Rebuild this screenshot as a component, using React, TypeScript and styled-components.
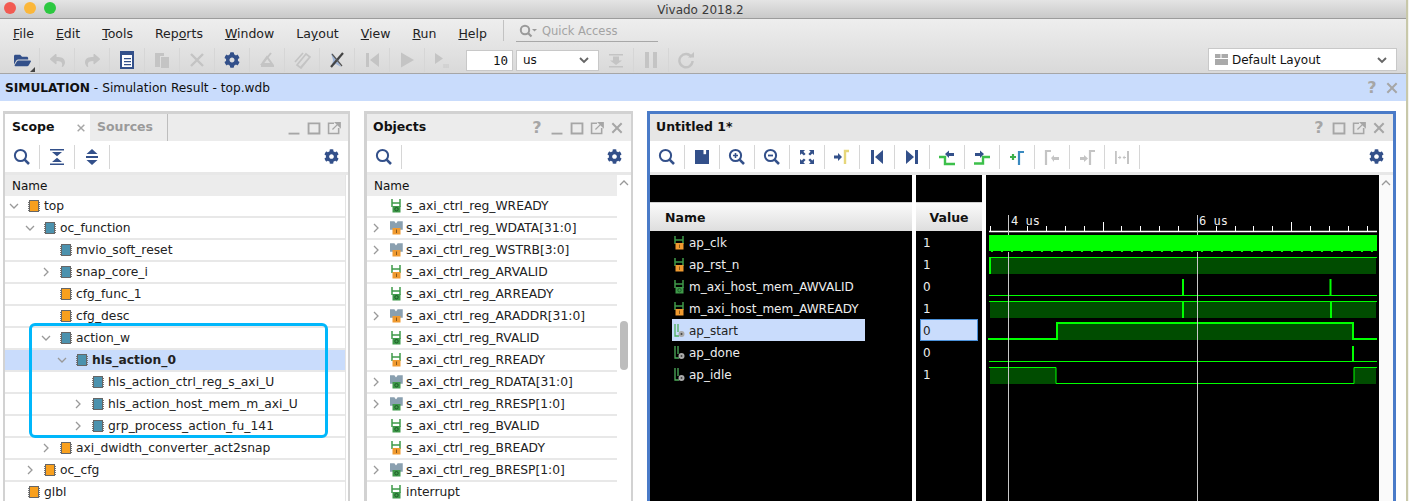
import React from 'react'
import styled, { createGlobalStyle } from 'styled-components'
import { FaCog, FaFolderOpen, FaReply, FaShare } from 'react-icons/fa'

const NAVY = '#33508a'
const OFF = '#c4c4c4'
const MONO = '"DejaVu Sans Mono", monospace'

const Global = createGlobalStyle`
  html, body { margin: 0; padding: 0; background: #fff; overflow: hidden; }
  body { font-family: "DejaVu Sans", sans-serif; font-size: 12px; color: #111; }
  * { box-sizing: border-box; }
`

const Screen = styled.div`
  width: 1409px;
  height: 501px;
  display: flex;
  overflow: hidden;
`
const Win = styled.div`
  width: 1406px;
  display: flex;
  flex-direction: column;
`
const Edge = styled.div`
  flex: 1;
  background: linear-gradient(90deg, #c8c8aa 2px, #f4f4ee 2px);
`
const TitleBar = styled.div`
  height: 19px;
  flex: none;
  display: flex;
  align-items: center;
  justify-content: center;
  position: relative;
  background: linear-gradient(#e4e4e4, #c9c9c9);
  border-bottom: 1px solid #9c9c9c;
  color: #3a3a3a;
  font-size: 12px;
  padding: 1px 5px 0 0;
`
const Lights = styled.div`
  position: absolute;
  left: 4px;
  top: 2px;
  display: flex;
  gap: 8px;
`
const Light = styled.span<{ $c: string }>`
  width: 12px;
  height: 12px;
  border-radius: 50%;
  background: ${(p) => p.$c};
`
const Chrome = styled.div`
  height: 55px;
  flex: none;
  background: linear-gradient(#eeeeee, #d9d9d9);
  border-bottom: 1px solid #a6a6a6;
  display: flex;
  flex-direction: column;
`
const MenuBar = styled.div`
  height: 26px;
  flex: none;
  display: flex;
  align-items: center;
  padding-left: 13px;
  gap: 22px;
  font-size: 12.5px;
  color: #222;
  padding-top: 3px;
`
const MenuSep = styled.div`
  width: 1px;
  height: 21px;
  background: #c2c2c2;
  margin-left: -6px;
  margin-right: -10px;
  margin-top: -6px;
`
const Quick = styled.div`
  width: 142px;
  height: 21px;
  margin-top: -5px;
  border-bottom: 1px solid #a8a8a8;
  display: flex;
  align-items: center;
  gap: 5px;
  padding-left: 3px;
  color: #a3a3a3;
  font-size: 11.5px;
`
const MainTools = styled.div`
  flex: 1;
  display: flex;
  align-items: center;
  padding: 2px 0 0 5px;
`
const Cell = styled.div<{ $plain?: boolean }>`
  width: 35px;
  height: 24px;
  flex: none;
  position: relative;
  display: flex;
  align-items: center;
  justify-content: center;
  border-right: 1px solid ${(p) => (p.$plain ? 'transparent' : '#d6d6d6')};
`
const CornerMark = styled.span`
  position: absolute;
  right: 4px;
  bottom: 0;
  border-style: solid;
  border-width: 0 0 5px 5px;
  border-color: transparent transparent #444 transparent;
`
const SpinBox = styled.div`
  width: 47px;
  height: 21px;
  margin-left: 6px;
  background: #fff;
  border: 1px solid #c8c8c8;
  font-family: ${MONO};
  font-size: 12.5px;
  display: flex;
  align-items: center;
  justify-content: flex-end;
  padding-right: 4px;
`
const Combo = styled.div<{ $w: number; $h: number }>`
  width: ${(p) => p.$w}px;
  height: ${(p) => p.$h}px;
  background: #fff;
  border: 1px solid #c8c8c8;
  display: flex;
  align-items: center;
  font-size: 12px;
  padding: 0 8px 0 6px;
  justify-content: space-between;
`
const ComboLabel = styled.span`
  display: flex;
  align-items: center;
  gap: 4px;
`
const ComboWrap = styled.div`
  margin-left: 3px;
`
const Push = styled.div`
  flex: 1;
`
const LayoutWrap = styled.div`
  margin-right: 9px;
  margin-top: -1px;
`
const ContextBar = styled.div`
  height: 27px;
  flex: none;
  background: #c9dcfc;
  display: flex;
  align-items: center;
  padding: 0 7px 0 5px;
  font-size: 12.2px;
`
const ContextTitle = styled.b`
  font-weight: 700;
  color: #111;
`
const Grow = styled.div`
  flex: 1;
`
const HeadIcons = styled.div`
  display: flex;
  align-items: center;
  gap: 6px;
`
const Workspace = styled.div`
  flex: 1;
  min-height: 0;
  display: flex;
  padding: 10px 0 0 3px;
  gap: 14px;
  overflow: hidden;
`
const Panel = styled.div<{ $w: number; $active?: boolean }>`
  width: ${(p) => p.$w}px;
  flex: none;
  border: ${(p) => (p.$active ? '3px' : '2px')} solid ${(p) => (p.$active ? '#4a7bc8' : '#d2d2d2')};
  border-top-width: 3px;
  border-bottom: none;
  display: flex;
  flex-direction: column;
  background: #fff;
`
const ObjectsPanel = styled(Panel)`
  border-left-width: 3px;
`
const PanelHead = styled.div<{ $active?: boolean }>`
  height: 27px;
  flex: none;
  display: flex;
  align-items: center;
  background: ${(p) => (p.$active ? '#e6e6e6' : '#ececec')};
  padding-right: 7px;
`
const Tab = styled.div<{ $on?: boolean }>`
  height: 27px;
  display: flex;
  align-items: center;
  font-weight: 700;
  font-size: 12.5px;
  background: ${(p) => (p.$on ? '#fff' : 'transparent')};
  color: ${(p) => (p.$on ? '#111' : '#9a9a9a')};
  padding: 0 0 2px 7px;
  width: ${(p) => (p.$on ? '85px' : '78px')};
  border-right: ${(p) => (p.$on ? 'none' : '1px solid #bdbdbd')};
  justify-content: space-between;
`
const TabClose = styled.span`
  margin: 2px 4px 0 0;
  display: flex;
`
const HeadTitle = styled.div`
  font-weight: 700;
  font-size: 12.5px;
  padding: 0 0 2px 6px;
`
const PanelTools = styled.div`
  height: 31px;
  flex: none;
  display: flex;
  align-items: center;
  padding-right: 9px;
  background: #fff;
`
const Strip = styled.div`
  height: 3px;
  flex: none;
  background: #e8e8e8;
`
const ListArea = styled.div`
  flex: 1;
  min-height: 0;
  display: flex;
  position: relative;
`
const List = styled.div`
  flex: 1;
  min-width: 0;
`
const Gutter = styled.div<{ $w: number; $line?: boolean }>`
  width: ${(p) => p.$w}px;
  flex: none;
  background: #fff;
  position: relative;
  border-left: ${(p) => (p.$line ? '1px solid #e4e4e4' : 'none')};
  display: flex;
  justify-content: center;
  padding-top: 3px;
`
const Thumb = styled.div`
  position: absolute;
  top: 146px;
  left: 3px;
  width: 8px;
  height: 49px;
  border-radius: 4px;
  background: #bdbdbd;
`
const ListHeader = styled.div`
  height: 21px;
  background: #ececec;
  padding-left: 7px;
  display: flex;
  align-items: center;
`
const Row = styled.div<{ $sel?: boolean }>`
  height: 22px;
  display: flex;
  align-items: center;
  border-bottom: 2px solid #e8e8e8;
  background: ${(p) => (p.$sel ? '#c9dcfc' : '#fff')};
  font-weight: ${(p) => (p.$sel ? 700 : 400)};
  font-size: 12.3px;
  color: #222;
`
const Twist = styled.span<{ $level: number }>`
  margin-left: ${(p) => p.$level * 16 + 1}px;
  width: 16px;
  flex: none;
  display: flex;
  align-items: center;
  justify-content: center;
`
const Glyph = styled.span`
  width: 16px;
  margin-left: 6px;
  flex: none;
  display: flex;
  align-items: center;
`
const Callout = styled.div`
  position: absolute;
  left: 24px;
  top: 148px;
  width: 299px;
  height: 115px;
  border: 3px solid #00b7fb;
  border-radius: 6px;
  pointer-events: none;
`
const WaveBody = styled.div`
  flex: 1;
  min-height: 0;
  display: flex;
  background: #fff;
  gap: 4px;
`
const NamePane = styled.div`
  width: 262px;
  flex: none;
  background: #000;
  padding-top: 27px;
`
const ValuePane = styled.div`
  width: 66px;
  flex: none;
  background: #000;
  padding-top: 27px;
`
const ColumnHead = styled.div<{ $center?: boolean }>`
  height: 29px;
  background: linear-gradient(#fafafa, #dedede);
  border-top: 1px solid #cfcfcf;
  font-weight: 700;
  font-size: 12.5px;
  display: flex;
  align-items: center;
  justify-content: ${(p) => (p.$center ? 'center' : 'flex-start')};
  padding-left: ${(p) => (p.$center ? 0 : 15)}px;
  color: #111;
`
const WaveRow = styled.div<{ $sel?: boolean }>`
  height: 22px;
  width: 193px;
  margin-left: 22px;
  padding: 1px 0 0 1px;
  display: flex;
  align-items: center;
  gap: 3px;
  color: ${(p) => (p.$sel ? '#222' : '#eee')};
  background: ${(p) => (p.$sel ? '#c9dcfc' : 'transparent')};
`
const ValueCell = styled.div<{ $sel?: boolean }>`
  height: 22px;
  width: 58px;
  margin-left: 4px;
  padding: 1px 0 0 2px;
  display: flex;
  align-items: center;
  color: ${(p) => (p.$sel ? '#222' : '#eee')};
  background: ${(p) => (p.$sel ? '#c9dcfc' : 'transparent')};
  border: 1px solid ${(p) => (p.$sel ? '#4a90d9' : 'transparent')};
`
const WavePane = styled.div`
  width: 393px;
  flex: none;
  background: #000;
`
const WaveSvg = styled.svg`
  display: block;
`
const WaveScroll = styled.div`
  flex: 1;
  background: #fafafa;
  margin-left: -4px;
  display: flex;
  justify-content: center;
  padding-top: 3px;
  height: 100%;
`
const Help = styled.span`
  font-weight: 700;
  font-size: 16px;
  color: #a6a6a6;
  width: 14px;
  text-align: center;
  line-height: 14px;
`

/* ---------- small glyphs ---------- */

const Ic = ({ size = 18, children }: { size?: number; children: React.ReactNode }) => (
  <svg width={size} height={size} viewBox="0 0 18 18">
    {children}
  </svg>
)
const Search = () => (
  <>
    <circle cx="7.5" cy="7.5" r="5.6" fill="#fff" fillOpacity=".4" stroke={NAVY} strokeWidth="2" />
    <path d="M11.6 11.6 16 16" stroke={NAVY} strokeWidth="2.6" />
  </>
)
const Step = ({ d }: { d: string }) => <path d={d} fill="none" stroke="#3cc04a" strokeWidth="2.4" />

const icons: Record<string, React.ReactNode> = {
  search: <Search />,
  collapse: <path d="M2 1h14v1.6H2zM4 4h10L9 8.2zM4 14l5-4.2L14 14zM2 15.4h14V17H2z" fill={NAVY} />,
  expand: <path d="M9 1l5.5 5h-11zM3 8h12v2H3zM3.5 12h11L9 17z" fill={NAVY} />,
  save: (
    <>
      <path d="M2 2h14v14H2z" fill={NAVY} />
      <path d="M10.5 2h2.6v4.2h-2.6z" fill="#fff" />
    </>
  ),
  zoomIn: (
    <>
      <Search />
      <path d="M5 7.5h5M7.5 5v5" stroke={NAVY} strokeWidth="1.6" />
    </>
  ),
  zoomOut: (
    <>
      <Search />
      <path d="M5 7.5h5" stroke={NAVY} strokeWidth="1.8" />
    </>
  ),
  fit: (
    <path
      d="M2 2h5L5.4 3.7l2.2 2.2-1.7 1.7-2.2-2.2L2 7zM16 2v5l-1.7-1.6-2.2 2.2-1.7-1.7 2.2-2.2L11 2zM2 16v-5l1.7 1.6 2.2-2.2 1.7 1.7-2.2 2.2L7 16zM16 16h-5l1.6-1.7-2.2-2.2 1.7-1.7 2.2 2.2L16 11z"
      fill={NAVY}
    />
  ),
  gotoCursor: (
    <>
      <path d="M1 7.5h4V5l4 4-4 4v-2.5H1z" fill={NAVY} />
      <path d="M12 16V3h4" fill="none" stroke="#e6d67a" strokeWidth="2.4" />
    </>
  ),
  first: <path d="M3 2h3v14H3zM15 2v14L7 9z" fill={NAVY} />,
  last: <path d="M3 2v14l8-7zM12 2h3v14h-3z" fill={NAVY} />,
  prevEdge: (
    <>
      <Step d="M1 9h6v7h10" />
      <path d="M7 6l4-3.5V5h5v3h-5v2z" fill={NAVY} />
    </>
  ),
  nextEdge: (
    <>
      <path d="M2 5h5V2.5L11 6l-4 4V8H2z" fill={NAVY} />
      <Step d="M1 15.5h9V9h7" />
    </>
  ),
  addMarker: (
    <>
      <path d="M2 9h6M5 6v6" stroke="#3cb04a" strokeWidth="2.2" />
      <path d="M11 17V4h5" fill="none" stroke="#3a8ac0" strokeWidth="2.2" />
    </>
  ),
  markerPrev: (
    <>
      <path d="M3 17V3h5" fill="none" stroke={OFF} strokeWidth="2.2" />
      <path d="M8 10l3-3v2h5v3h-5v2z" fill={OFF} />
    </>
  ),
  markerNext: (
    <>
      <path d="M2 9h4V7l4 3.5L6 14v-2H2z" fill={OFF} />
      <path d="M12 17V3h5" fill="none" stroke={OFF} strokeWidth="2.2" />
    </>
  ),
  swap: (
    <path d="M2 3h1.8v13H2zM14 3h2v13h-2zM5 9h1.4V7.6L8.4 9.6 6.4 11.5V10H5zM13 9h-1.4V7.6L9.6 9.6l2 1.9V10H13z" fill={OFF} />
  ),
  doc: (
    <>
      <path d="M3 1h12v16H3z" fill="#fff" stroke={NAVY} strokeWidth="2" />
      <path d="M3 1h12v3H3zM6 7h7v1.2H6zM6 10h7v1.2H6zM6 13h7v1.2H6z" fill={NAVY} />
    </>
  ),
  paste: <path d="M2 2h9v3H7v11H2zM8 6h8v11H8z" fill={OFF} />,
  cross: <path d="M3 3l12 12M15 3L3 15" stroke={OFF} strokeWidth="2.4" />,
  build1: (
    <>
      <path d="M3 15h13M4 13l5-7 5 7z" fill="none" stroke={OFF} strokeWidth="2" />
      <path d="M13 2L5 12" stroke={OFF} strokeWidth="2" />
    </>
  ),
  build2: <path d="M4 14l4 3 9-11-4-3zM2 11l8-9M8 16l8-9" fill="none" stroke={OFF} strokeWidth="1.7" />,
  sim: (
    <>
      <path d="M3 2l5 6 5-3-3 6 3 5-5-3-4 2 1-6z" fill="#9fb4d6" />
      <path d="M15 2L3 16" stroke="#444" strokeWidth="2.2" />
      <path d="M4 3l10 12" stroke="#555" strokeWidth="1.2" />
    </>
  ),
  runBack: <path d="M3 2h3v14H3zM16 2v14L7 9z" fill={OFF} />,
  play: <path d="M3 1.5v15L16 9z" fill={OFF} />,
  playT: (
    <>
      <path d="M2 2v11l8-5.5z" fill={OFF} />
      <path d="M11 13v4M13 13v4M15 13v4" stroke={OFF} strokeWidth=".8" />
    </>
  ),
  step: <path d="M2 3h14v1.4H2zM6 5.5h6v4h3l-6 4.5-6-4.5h3zM2 15h14v1.4H2z" fill={OFF} />,
  pause: <path d="M3 1h4v16H3zM11 1h4v16h-4z" fill={OFF} />,
  refresh: (
    <>
      <path d="M14.5 6A6.6 6.6 0 1 0 15.6 10" fill="none" stroke={OFF} strokeWidth="2.4" />
      <path d="M11 6.5h6V1z" fill={OFF} />
    </>
  ),
}

const Tool = ({ name, plain }: { name: string; plain?: boolean }) => (
  <Cell $plain={plain}>
    <Ic>{icons[name]}</Ic>
  </Cell>
)

const Min = () => (
  <Ic size={14}>
    <path d="M2 15h14v2.4H2z" fill="#a6a6a6" />
  </Ic>
)
const Max = () => (
  <Ic size={14}>
    <path d="M2 3h14v13H2z" fill="none" stroke="#a6a6a6" strokeWidth="2.4" />
  </Ic>
)
const Pop = () => (
  <Ic size={14}>
    <path d="M9 3H2v13h13V9" fill="none" stroke="#a6a6a6" strokeWidth="2" />
    <path d="M11 2h6v6zM7 11l6-6" fill="#a6a6a6" stroke="#a6a6a6" strokeWidth="1.6" />
  </Ic>
)
const Close = ({ size = 14 }: { size?: number }) => (
  <Ic size={size}>
    <path d="M3 3l12 12M15 3L3 15" stroke="#a6a6a6" strokeWidth="2.6" />
  </Ic>
)

const chevrons = { down: 'M1 3l4 4 4-4', right: 'M3 1l4 4-4 4', up: 'M1 7l4-4 4 4' }
const Chevron = ({ dir, dark }: { dir: keyof typeof chevrons; dark?: boolean }) => (
  <svg width={dark ? 12 : 10} height="10" viewBox="0 0 10 10">
    <path d={chevrons[dir]} fill="none" stroke={dark ? '#666' : '#999'} strokeWidth={dark ? 1.9 : 1.3} />
  </svg>
)

const Chip = ({ c }: { c: string }) => (
  <svg width="12" height="12" viewBox="0 0 12 12">
    <path d="M0 2.5h12M0 4.5h12M0 6.5h12M0 8.5h12M0 10.5h12" stroke="#777" strokeWidth="1" />
    <rect x="1.5" y=".5" width="9" height="11" fill={c} stroke="#666" strokeWidth="1" />
  </svg>
)

const Signal = ({ kind }: { kind: string }) => {
  const input = kind[0] === 'i'
  const bus = kind[1] === 'b'
  const box = input ? '#f09a30' : '#3f9a4a'
  const pin = bus ? '#8aa0b0' : '#3f9a4a'
  return (
    <svg width="13" height="14" viewBox="0 0 13 14">
      <path d={bus ? 'M0 1h4l2 3 2-3h4v7H0z' : 'M2 0v8M10 0v8M2 4h8'} fill={bus ? pin : 'none'} stroke={pin} strokeWidth="1.5" />
      <rect x="2.5" y="7" width="8" height="6.5" fill={box} />
      {input ? (
        <path d="M6.5 8.5v3.5" stroke="#5b3a10" strokeOpacity=".7" />
      ) : (
        <circle cx="6.5" cy="10.2" r="1.7" fill="none" stroke="#1e5c28" strokeWidth="1" />
      )}
    </svg>
  )
}
const Logic = () => (
  <svg width="13" height="14" viewBox="0 0 13 14">
    <path d="M2 0v12h4M5 0v8" fill="none" stroke="#4fae5c" strokeWidth="1.3" />
    <circle cx="8.5" cy="10" r="3" fill="#aaa" />
    <circle cx="8.5" cy="10" r="1" fill="#444" />
  </svg>
)

/* ---------- data ---------- */

const ORANGE = '#f8a01e'
const TEAL = '#4c92ae'
const scope = [
  { n: 'top', l: 0, c: ORANGE, t: 'down' as const },
  { n: 'oc_function', l: 1, c: TEAL, t: 'down' as const },
  { n: 'mvio_soft_reset', l: 2, c: TEAL },
  { n: 'snap_core_i', l: 2, c: TEAL, t: 'right' as const },
  { n: 'cfg_func_1', l: 2, c: ORANGE },
  { n: 'cfg_desc', l: 2, c: ORANGE },
  { n: 'action_w', l: 2, c: TEAL, t: 'down' as const },
  { n: 'hls_action_0', l: 3, c: TEAL, t: 'down' as const, sel: true },
  { n: 'hls_action_ctrl_reg_s_axi_U', l: 4, c: TEAL },
  { n: 'hls_action_host_mem_m_axi_U', l: 4, c: TEAL, t: 'right' as const },
  { n: 'grp_process_action_fu_141', l: 4, c: TEAL, t: 'right' as const },
  { n: 'axi_dwidth_converter_act2snap', l: 2, c: ORANGE, t: 'right' as const },
  { n: 'oc_cfg', l: 1, c: ORANGE, t: 'right' as const },
  { n: 'glbl', l: 0, c: ORANGE },
]
const objects = [
  ['s_axi_ctrl_reg_WREADY', 'os'],
  ['s_axi_ctrl_reg_WDATA[31:0]', 'ib'],
  ['s_axi_ctrl_reg_WSTRB[3:0]', 'ib'],
  ['s_axi_ctrl_reg_ARVALID', 'is'],
  ['s_axi_ctrl_reg_ARREADY', 'os'],
  ['s_axi_ctrl_reg_ARADDR[31:0]', 'ib'],
  ['s_axi_ctrl_reg_RVALID', 'os'],
  ['s_axi_ctrl_reg_RREADY', 'is'],
  ['s_axi_ctrl_reg_RDATA[31:0]', 'ob'],
  ['s_axi_ctrl_reg_RRESP[1:0]', 'ob'],
  ['s_axi_ctrl_reg_BVALID', 'os'],
  ['s_axi_ctrl_reg_BREADY', 'is'],
  ['s_axi_ctrl_reg_BRESP[1:0]', 'ob'],
  ['interrupt', 'os'],
]
const waves = [
  { n: 'ap_clk', v: '1', k: 'is' },
  { n: 'ap_rst_n', v: '1', k: 'is' },
  { n: 'm_axi_host_mem_AWVALID', v: '0', k: 'os' },
  { n: 'm_axi_host_mem_AWREADY', v: '1', k: 'is' },
  { n: 'ap_start', v: '0', k: 'l', sel: true },
  { n: 'ap_done', v: '0', k: 'l' },
  { n: 'ap_idle', v: '1', k: 'l' },
]
const menus: [string, string, string][] = [
  ['', 'F', 'ile'],
  ['', 'E', 'dit'],
  ['', 'T', 'ools'],
  ['Rep', 'o', 'rts'],
  ['', 'W', 'indow'],
  ['La', 'y', 'out'],
  ['', 'V', 'iew'],
  ['', 'R', 'un'],
  ['', 'H', 'elp'],
]
const waveTools = [
  'search',
  'save',
  'zoomIn',
  'zoomOut',
  'fit',
  'gotoCursor',
  'first',
  'last',
  'prevEdge',
  'nextEdge',
  'addMarker',
  'markerPrev',
  'markerNext',
  'swap',
]

/* ---------- waveform: coordinates inside the 393px black pane ---------- */

const Trace = () => {
  const ticks: number[] = []
  for (let x = 3.5; x < 391; x += 18.85) ticks.push(Math.round(x) + 0.5)
  const teeth: number[] = []
  for (let x = 5; x < 390; x += 10) teeth.push(x)
  const hi = '#00ff00'
  const fill = '#004c00'
  return (
    <WaveSvg width="393" height="326" viewBox="0 0 393 326">
      <path d="M3 56.5h388" stroke="#fff" strokeWidth="1.5" />
      {ticks.map((x, i) => (
        <path key={x} d={`M${x} ${i % 10 === 1 ? 40 : i % 5 === 1 ? 47 : 51}V56`} stroke="#fff" />
      ))}
      <text x="25" y="50" fill="#eee" fontFamily={MONO} fontSize="12">4 us</text>
      <text x="213" y="50" fill="#eee" fontFamily={MONO} fontSize="12">6 us</text>

      <rect x="3" y="60" width="388" height="16" fill={hi} />
      {teeth.map((x) => (
        <rect key={x} x={x} y="76" width="2" height="1" fill={hi} />
      ))}

      <rect x="3" y="82" width="387" height="17" fill={fill} />
      <path d="M3 82.5h388" stroke={hi} />
      <path d="M4 82v17" stroke={hi} strokeWidth="2" />

      <path d="M3 120.5h388" stroke={hi} />
      <path d="M197 104v16M344.5 104v16" stroke={hi} strokeWidth="2" />

      <rect x="4" y="126" width="386" height="17" fill={fill} />
      <path d="M3 126.5h388" stroke={hi} />
      <path d="M197 126v17M345 126v17" stroke={hi} strokeWidth="2" />

      <rect x="71" y="148" width="296" height="17" fill={fill} />
      <path d="M2 164h69V148h296v16h24" fill="none" stroke={hi} strokeWidth="2" />

      <path d="M3 186.5h388" stroke={hi} />
      <path d="M367 171v15" stroke={hi} strokeWidth="2" />

      <rect x="4" y="193" width="66" height="16" fill={fill} />
      <rect x="368" y="193" width="22" height="16" fill={fill} />
      <path d="M3 192.5h67v16h298v-16h23" fill="none" stroke={hi} />

      <path d="M22.5 40V60M22.5 77V326M211.5 40V60M211.5 77V326" stroke="#c8c8c8" strokeWidth="1" />
    </WaveSvg>
  )
}

export default function App() {
  return (
    <Screen>
      <Global />
      <Win>
        <TitleBar>
          <Lights>
            <Light $c="#f25b52" />
            <Light $c="#fbb73a" />
            <Light $c="#2cc840" />
          </Lights>
          Vivado 2018.2
        </TitleBar>

        <Chrome>
          <MenuBar>
            {menus.map(([a, u, b]) => (
              <span key={a + u + b}>
                {a}
                <u>{u}</u>
                {b}
              </span>
            ))}
            <MenuSep />
            <Quick>
              <svg width="18" height="14" viewBox="0 0 18 14">
                <circle cx="6" cy="6" r="4.2" fill="none" stroke="#9a9a9a" strokeWidth="2" />
                <path d="M9 9l3.5 3.5" stroke="#9a9a9a" strokeWidth="2.2" />
                <path d="M13 5h5l-2.5 2.5z" fill="#9a9a9a" />
              </svg>
              Quick Access
            </Quick>
          </MenuBar>
          <MainTools>
            <Cell>
              <FaFolderOpen size={17} color={NAVY} />
              <CornerMark />
            </Cell>
            <Cell>
              <FaReply size={15} color={OFF} />
            </Cell>
            <Cell>
              <FaShare size={15} color={OFF} />
            </Cell>
            <Tool name="doc" />
            <Tool name="paste" />
            <Tool name="cross" />
            <Cell>
              <FaCog size={16} color={NAVY} />
            </Cell>
            <Tool name="build1" />
            <Tool name="build2" />
            <Tool name="sim" />
            <Tool name="runBack" />
            <Tool name="play" />
            <Tool name="playT" plain />
            <SpinBox>10</SpinBox>
            <ComboWrap>
              <Combo $w={83} $h={21}>
                us
                <Chevron dir="down" dark />
              </Combo>
            </ComboWrap>
            <Tool name="step" />
            <Tool name="pause" />
            <Tool name="refresh" plain />
            <Push />
            <LayoutWrap>
              <Combo $w={189} $h={23}>
                <ComboLabel>
                  <svg width="13" height="11" viewBox="0 0 13 11">
                    <path d="M0 0h5.5v4H0zM6.5 0H13v4H6.5zM0 5h13v6H0z" fill="#aaa" />
                  </svg>
                  Default Layout
                </ComboLabel>
                <Chevron dir="down" dark />
              </Combo>
            </LayoutWrap>
          </MainTools>
        </Chrome>

        <ContextBar>
          <ContextTitle>SIMULATION</ContextTitle>&nbsp;- Simulation Result - top.wdb
          <Grow />
          <HeadIcons>
            <Help>?</Help>
            <Close />
          </HeadIcons>
        </ContextBar>

        <Workspace>
          <Panel $w={347}>
            <PanelHead>
              <Tab $on>
                Scope
                <TabClose>
                  <Close size={10} />
                </TabClose>
              </Tab>
              <Tab>Sources</Tab>
              <Grow />
              <HeadIcons>
                <Min />
                <Max />
                <Pop />
              </HeadIcons>
            </PanelHead>
            <PanelTools>
              <Tool name="search" />
              <Tool name="collapse" />
              <Tool name="expand" />
              <Grow />
              <FaCog size={15} color={NAVY} />
            </PanelTools>
            <Strip />
            <ListArea>
              <List>
                <ListHeader>Name</ListHeader>
                {scope.map((s) => (
                  <Row key={s.n} $sel={s.sel}>
                    <Twist $level={s.l}>{s.t && <Chevron dir={s.t} />}</Twist>
                    <Glyph>
                      <Chip c={s.c} />
                    </Glyph>
                    {s.n}
                  </Row>
                ))}
              </List>
              <Gutter $w={3} $line />
              <Callout />
            </ListArea>
          </Panel>

          <ObjectsPanel $w={269}>
            <PanelHead>
              <HeadTitle>Objects</HeadTitle>
              <Grow />
              <HeadIcons>
                <Help>?</Help>
                <Min />
                <Max />
                <Pop />
                <Close />
              </HeadIcons>
            </PanelHead>
            <PanelTools>
              <Tool name="search" />
              <Grow />
              <FaCog size={15} color={NAVY} />
            </PanelTools>
            <Strip />
            <ListArea>
              <List>
                <ListHeader>Name</ListHeader>
                {objects.map(([n, k]) => (
                  <Row key={n}>
                    <Twist $level={0}>{k[1] === 'b' && <Chevron dir="right" />}</Twist>
                    <Glyph>
                      <Signal kind={k} />
                    </Glyph>
                    {n}
                  </Row>
                ))}
              </List>
              <Gutter $w={14}>
                <Chevron dir="up" />
                <Thumb />
              </Gutter>
            </ListArea>
          </ObjectsPanel>

          <Panel $w={749} $active>
            <PanelHead $active>
              <HeadTitle>Untitled 1*</HeadTitle>
              <Grow />
              <HeadIcons>
                <Help>?</Help>
                <Max />
                <Pop />
                <Close />
              </HeadIcons>
            </PanelHead>
            <PanelTools>
              {waveTools.map((n) => (
                <Tool key={n} name={n} />
              ))}
              <Grow />
              <FaCog size={15} color={NAVY} />
            </PanelTools>
            <Strip />
            <WaveBody>
              <NamePane>
                <ColumnHead>Name</ColumnHead>
                {waves.map((w) => (
                  <WaveRow key={w.n} $sel={w.sel}>
                    {w.k === 'l' ? <Logic /> : <Signal kind={w.k} />}
                    {w.n}
                  </WaveRow>
                ))}
              </NamePane>
              <ValuePane>
                <ColumnHead $center>Value</ColumnHead>
                {waves.map((w) => (
                  <ValueCell key={w.n} $sel={w.sel}>
                    {w.v}
                  </ValueCell>
                ))}
              </ValuePane>
              <WavePane>
                <Trace />
              </WavePane>
              <WaveScroll>
                <Chevron dir="up" />
              </WaveScroll>
            </WaveBody>
          </Panel>
        </Workspace>
      </Win>
      <Edge />
    </Screen>
  )
}
